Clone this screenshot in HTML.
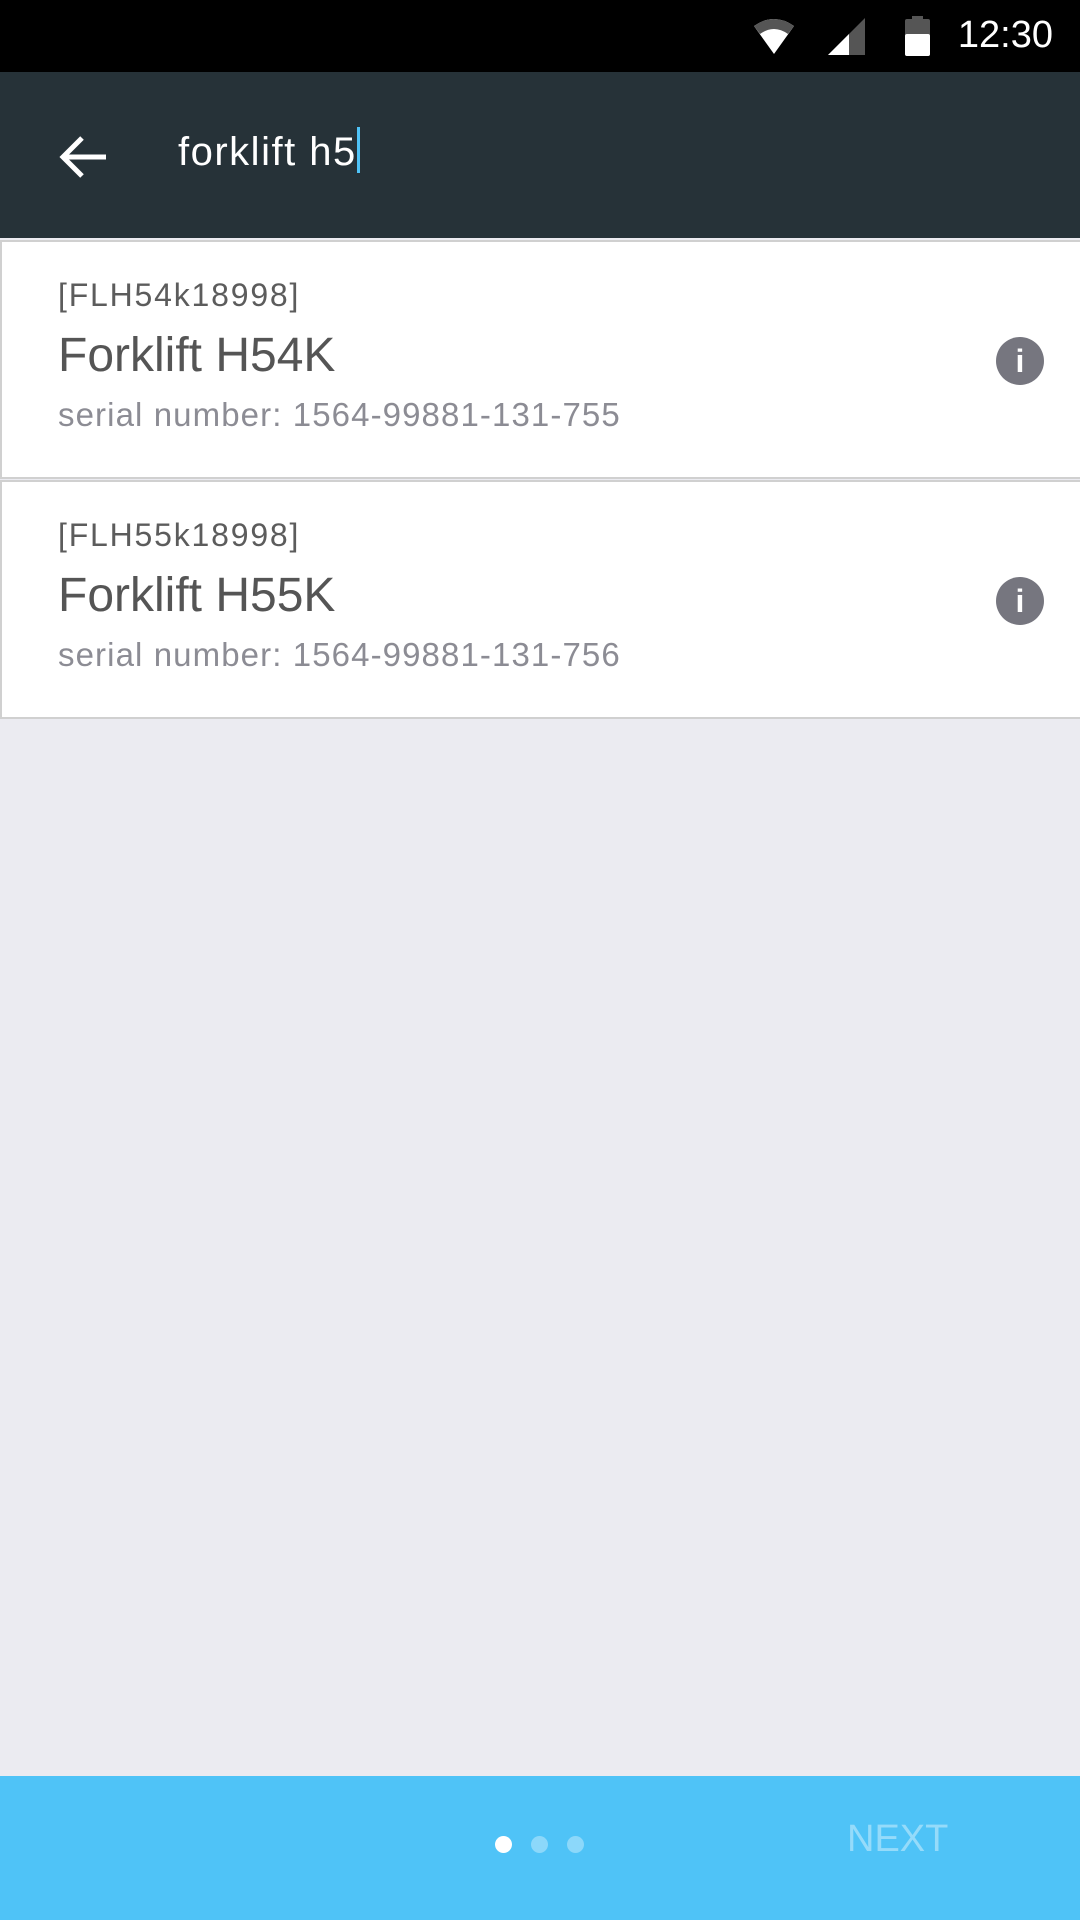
<!DOCTYPE html>
<html><head><meta charset="utf-8"><style>
*{margin:0;padding:0;box-sizing:border-box}
body{width:1080px;height:1920px;background:#ebebf1;font-family:"Liberation Sans",sans-serif;position:relative;overflow:hidden}
.status{position:absolute;left:0;top:0;width:1080px;height:72px;background:#000}
.time{position:absolute;right:27px;top:14px;color:#fff;font-size:38px}
.bar{position:absolute;left:0;top:72px;width:1080px;height:166px;background:#263238}
.q{position:absolute;left:178px;top:55px;color:#fff;font-size:40px;letter-spacing:1.5px}
.cur{display:inline-block;width:3px;height:46px;background:#4fc3f7;vertical-align:-8px;margin-left:0}
.card{position:absolute;left:0;width:1084px;height:239px;background:#fff;border:2px solid #d0d0d0}
.c1{top:240px}.c2{top:480px}
.code{position:absolute;left:56px;top:35px;font-size:32px;letter-spacing:1.8px;color:#5c5c5c}
.title{position:absolute;left:56px;top:86px;font-size:48px;color:#555}
.ser{position:absolute;left:56px;top:154px;font-size:33px;letter-spacing:1.1px;color:#8c8c94}
.info{position:absolute;left:994px;top:95px;width:48px;height:48px;border-radius:50%;background:#76767f;color:#fff;font-weight:bold;font-size:32px;text-align:center;line-height:48px}
.bot{position:absolute;left:0;top:1776px;width:1080px;height:144px;background:#4fc3f7}
.dot{position:absolute;top:1836px;width:17px;height:17px;border-radius:50%;background:rgba(255,255,255,.35)}
.next{position:absolute;left:847px;top:1818px;font-size:38px;color:rgba(255,255,255,.4)}
</style></head><body>
<div class="status">
<svg style="position:absolute;left:752px;top:18px" width="44" height="38" viewBox="0 0 44 38"><path d="M2 8 Q22 -6 42 8 L22 36 Z" fill="#fff"/><path d="M2 8 Q22 -6 42 8 L36 16 Q22 6 8 16Z" fill="#555"/></svg>
<svg style="position:absolute;left:828px;top:18px" width="38" height="37" viewBox="0 0 38 37"><path d="M37 0 L37 37 L0 37 Z" fill="#555"/><path d="M21 16 L21 37 L0 37 Z" fill="#fff"/></svg>
<svg style="position:absolute;left:905px;top:16px" width="25" height="40" viewBox="0 0 25 40"><rect x="7" y="0" width="11" height="4" fill="#555"/><rect x="0" y="3" width="25" height="37" rx="2" fill="#555"/><rect x="0" y="18" width="25" height="22" rx="2" fill="#fff"/></svg>
<div class="time">12:30</div>
</div>
<div class="bar">
<svg style="position:absolute;left:58px;top:60px" width="50" height="50" viewBox="0 0 50 50"><path d="M48 25 H6 M24 6 L5 25 L24 44" stroke="#fff" stroke-width="5" fill="none"/></svg>
<div class="q">forklift h5<span class="cur"></span></div>
</div>
<div class="card c1"><div class="code">[FLH54k18998]</div><div class="title">Forklift H54K</div><div class="ser">serial number: 1564-99881-131-755</div><div class="info">i</div></div>
<div class="card c2"><div class="code">[FLH55k18998]</div><div class="title">Forklift H55K</div><div class="ser">serial number: 1564-99881-131-756</div><div class="info">i</div></div>
<div class="bot"></div>
<div class="dot" style="left:495px;background:#fff"></div>
<div class="dot" style="left:531px"></div>
<div class="dot" style="left:567px"></div>
<div class="next">NEXT</div>
</body></html>
